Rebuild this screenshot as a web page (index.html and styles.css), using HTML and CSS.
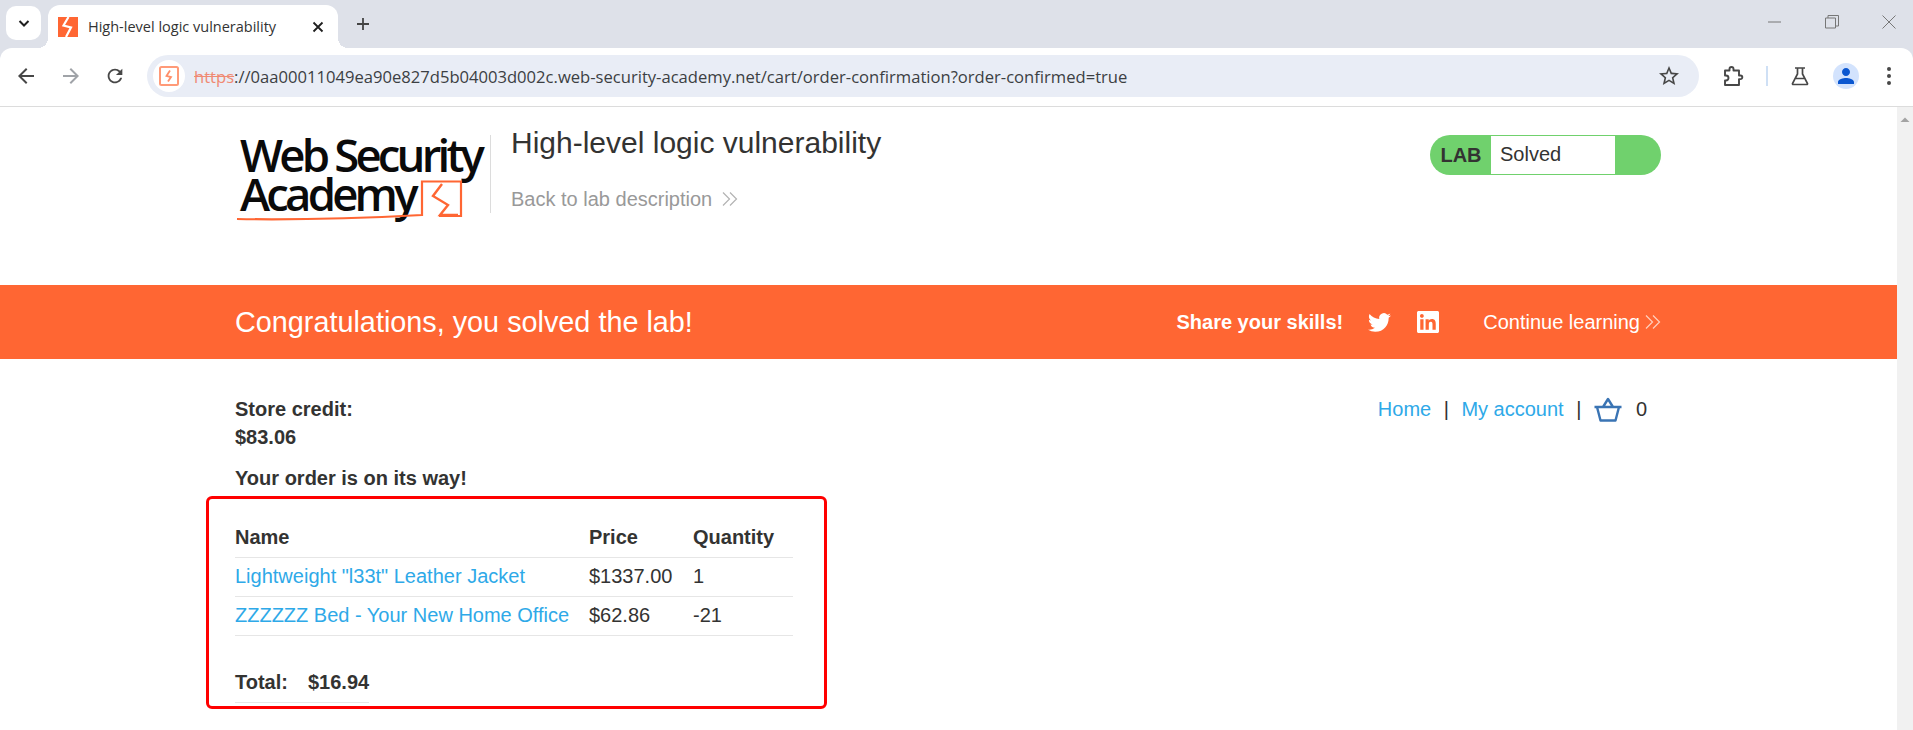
FILE: index.html
```html
<!DOCTYPE html>
<html lang="en">
<head>
    <meta charset="UTF-8">
    <title>High-level logic vulnerability</title>
    <link rel="stylesheet" href="styles.css">
</head>
<body>
    <div class="tabstrip">
        <div class="tab-search">
            <svg width="16" height="16" viewBox="0 0 16 16"><path d="M3.500 6l4.500 4.500L12.500 6" fill="none" stroke="#1f1f1f" stroke-width="2"/></svg>
        </div>
        <div class="tab">
            <svg class="tab-icon" width="20" height="20" viewBox="0 0 20 20"><rect width="20" height="20" fill="#ff6633"/><path d="M10.500 0L5.500 8.500l7.500 2L8 20" fill="none" stroke="#fff" stroke-width="2.200"/></svg>
            <span class="tab-title">High-level logic vulnerability</span>
            <svg class="tab-close" width="12" height="12" viewBox="0 0 12 12"><path d="M1.500 1.500l9 9M10.500 1.500l-9 9" stroke="#1f1f1f" stroke-width="1.800"/></svg>
        </div>
        <svg class="new-tab" width="14" height="14" viewBox="0 0 14 14"><path d="M7 1v12M1 7h12" stroke="#444" stroke-width="1.800"/></svg>
        <div class="window-buttons">
            <svg width="14" height="14" viewBox="0 0 14 14"><path d="M0 7h13" stroke="#777" stroke-width="1"/></svg>
            <svg width="14" height="14" viewBox="0 0 14 14"><path d="M.5 3h10v10H.500zM3 3V.5h10.500V11H10.500" fill="none" stroke="#777"/></svg>
            <svg width="14" height="14" viewBox="0 0 14 14"><path d="M.5.5l13 13M13.500.5l-13 13" stroke="#777"/></svg>
        </div>
    </div>

    <div class="toolbar">
        <svg class="nav-icon" width="24" height="24" viewBox="0 0 24 24"><path fill="#474747" d="M20 11H7.830l5.590-5.590L12 4l-8 8 8 8 1.410-1.410L7.830 13H20v-2z"/></svg>
        <svg class="nav-icon" width="24" height="24" viewBox="0 0 24 24"><path fill="#a0a3a8" d="M12 4l-1.410 1.410L16.170 11H4v2h12.170l-5.580 5.590L12 20l8-8z"/></svg>
        <svg class="nav-icon" width="22" height="22" viewBox="0 0 24 24"><path fill="#474747" d="M17.650 6.350A7.958 7.958 0 0012 4c-4.420 0-7.990 3.580-7.990 8s3.570 8 7.990 8c3.730 0 6.840-2.550 7.730-6h-2.080A5.990 5.990 0 0112 18c-3.310 0-6-2.690-6-6s2.690-6 6-6c1.660 0 3.140.690 4.220 1.780L13 11h7V4l-2.350 2.350z"/></svg>
        <div class="address-bar">
            <div class="site-icon">
                <svg width="20" height="20" viewBox="0 0 20 20"><rect x="1" y="1" width="18" height="18" rx="1.500" fill="#fff" stroke="#ff9a78" stroke-width="2"/><path d="M11 4.500L7.500 10l4.500 1L9 15.500" fill="none" stroke="#ff8f6a" stroke-width="1.800"/></svg>
            </div>
            <div class="url"><span class="url-scheme">https</span>://0aa00011049ea90e827d5b04003d002c.web-security-academy.net/cart/order-confirmation?order-confirmed=true</div>
            <svg class="star" width="24" height="24" viewBox="0 0 24 24"><path fill="#474747" d="M22 9.240l-7.190-.620L12 2 9.190 8.630 2 9.240l5.460 4.730L5.820 21 12 17.270 18.180 21l-1.630-7.030L22 9.240zM12 15.400l-3.760 2.270 1-4.280-3.320-2.880 4.380-.380L12 6.100l1.710 4.040 4.380.380-3.320 2.880 1 4.280L12 15.400z"/></svg>
        </div>
        <div class="toolbar-right">
            <svg width="22" height="22" viewBox="0 0 22 22"><path d="M3 5.500h4.500V4a2 2 0 014 0v1.500H17v5h1.500a1.800 1.800 0 010 3.600H17V20H3v-4.500h1a2.500 2.500 0 000-5H3z" fill="none" stroke="#474747" stroke-width="1.900" stroke-linejoin="round"/></svg>
            <span class="toolbar-sep"></span>
            <svg width="20" height="20" viewBox="0 0 20 20"><path d="M5 2h10M7.500 2v6L2.500 17.500a.8.8 0 00.7 1h13.600a.8.8 0 00.7-1L12.500 8V2M6 12.500h8" fill="none" stroke="#474747" stroke-width="1.700"/></svg>
            <div class="avatar">
                <svg width="24" height="24" viewBox="0 0 24 24"><path fill="#0b57d0" d="M12 12c2.210 0 4-1.790 4-4s-1.790-4-4-4-4 1.790-4 4 1.790 4 4 4zm0 2c-2.670 0-8 1.340-8 4v2h16v-2c0-2.660-5.330-4-8-4z"/></svg>
            </div>
            <svg width="6" height="20" viewBox="0 0 6 20"><circle cx="3" cy="3" r="2" fill="#474747"/><circle cx="3" cy="10" r="2" fill="#474747"/><circle cx="3" cy="17" r="2" fill="#474747"/></svg>
        </div>
    </div>

    <div class="viewport">
        <div class="page">
            <header class="lab-header">
                <div class="logo">
                    <div class="logo-line">Web Security</div>
                    <div class="logo-line">Academy</div>
                    <svg class="logo-mark" width="230" height="50" viewBox="0 0 230 50">
                        <path d="M2 44C60 45 130 43 187 40V6.500H226V41H204" fill="none" stroke="#ff6633" stroke-width="2.200"/>
                        <path d="M207 9L198 21L213 30L205 40H223" fill="none" stroke="#ff6633" stroke-width="2.400"/>
                    </svg>
                </div>
                <div class="lab-title">
                    <h2>High-level logic vulnerability</h2>
                    <a class="back-link" href="#">Back to lab description
                        <svg class="chevrons" width="16" height="16" viewBox="0 0 16 16"><path d="M1 1.500L7.500 8 1 14.500M8 1.500L14.500 8 8 14.500" fill="none" stroke="#b3b3b3" stroke-width="1.200"/></svg>
                    </a>
                </div>
                <div class="lab-status">
                    <span class="lab-label">LAB</span>
                    <span class="lab-state">Solved</span>
                </div>
            </header>

            <section class="solved-banner">
                <h4>Congratulations, you solved the lab!</h4>
                <div class="banner-right">
                    <strong class="share-label">Share your skills!</strong>
                    <svg class="share-twitter" width="23" height="23" viewBox="0 0 24 24"><path fill="#fff" d="M23.953 4.570a10 10 0 01-2.825.775 4.958 4.958 0 002.163-2.723c-.951.555-2.005.959-3.127 1.184a4.920 4.920 0 00-8.384 4.482C7.690 8.095 4.067 6.130 1.640 3.162a4.822 4.822 0 00-.666 2.475c0 1.710.870 3.213 2.188 4.096a4.904 4.904 0 01-2.228-.616v.060a4.923 4.923 0 003.946 4.827 4.996 4.996 0 01-2.212.085 4.936 4.936 0 004.604 3.417 9.867 9.867 0 01-6.102 2.105c-.390 0-.779-.023-1.170-.067a13.995 13.995 0 007.557 2.209c9.053 0 13.998-7.496 13.998-13.985 0-.210 0-.420-.015-.630A9.935 9.935 0 0024 4.590z"/></svg>
                    <svg class="share-linkedin" width="22" height="22" viewBox="0 0 24 24"><path fill="#fff" d="M20.447 20.452h-3.554v-5.569c0-1.328-.027-3.037-1.852-3.037-1.853 0-2.136 1.445-2.136 2.939v5.667H9.351V9h3.414v1.561h.046c.477-.900 1.637-1.850 3.370-1.850 3.601 0 4.267 2.370 4.267 5.455v6.286zM5.337 7.433c-1.144 0-2.063-.926-2.063-2.065 0-1.138.920-2.063 2.063-2.063 1.140 0 2.064.925 2.064 2.063 0 1.139-.925 2.065-2.064 2.065zm1.782 13.019H3.555V9h3.564v11.452zM22.225 0H1.771C.792 0 0 .774 0 1.729v20.542C0 23.227.792 24 1.771 24h20.451C23.200 24 24 23.227 24 22.271V1.729C24 .774 23.200 0 22.222 0h.003z"/></svg>
                    <a class="continue-link" href="#">Continue learning
                        <svg width="16" height="16" viewBox="0 0 16 16"><path d="M1 1.500L7.500 8 1 14.500M8 1.500L14.500 8 8 14.500" fill="none" stroke="#ffd0bf" stroke-width="1.200"/></svg>
                    </a>
                </div>
            </section>

            <section class="content">
                <div class="content-left">
                    <p class="credit">Store credit:<br>$83.06</p>
                    <p class="order-note">Your order is on its way!</p>
                    <div class="order-box">
                        <table class="order-table">
                            <tr><th class="col-name">Name</th><th class="col-price">Price</th><th>Quantity</th></tr>
                            <tr><td><a href="#">Lightweight "l33t" Leather Jacket</a></td><td>$1337.00</td><td>1</td></tr>
                            <tr><td><a href="#">ZZZZZZ Bed - Your New Home Office</a></td><td>$62.86</td><td>-21</td></tr>
                        </table>
                        <table class="total-table">
                            <tr><th>Total:</th><th>$16.94</th></tr>
                        </table>
                    </div>
                </div>
                <nav class="top-links">
                    <a href="#">Home</a>
                    <span class="pipe">|</span>
                    <a href="#">My account</a>
                    <span class="pipe">|</span>
                    <svg class="basket" width="28" height="25" viewBox="0 0 28 25"><path d="M.5 10h27M3 10l3.500 13.500h15L25 10M9 10l5-8 5 8" fill="none" stroke="#3a74b4" stroke-width="2.400" stroke-linejoin="round"/></svg>
                    <span class="cart-count">0</span>
                </nav>
            </section>
        </div>
        <div class="scrollbar">
            <svg width="16" height="12" viewBox="0 0 16 12"><path d="M3.500 9L8 4.500 12.500 9z" fill="#a3a3a3"/></svg>
        </div>
    </div>
</body>
</html>
```

FILE: styles.css
```css
/* Basic Reset */
* {
    margin: 0;
    padding: 0;
    box-sizing: border-box;
}

body {
    height: 730px;
    overflow: hidden;
    font-family: 'Liberation Sans', Arial, sans-serif;
    color: #333332;
    background-color: #dee1e9;
    display: flex;
    flex-direction: column;
}

a {
    color: #2ea9e8;
    text-decoration: none;
}

/* Browser chrome */
.tabstrip {
    height: 48px;
    flex-shrink: 0;
    display: flex;
    align-items: flex-end;
}

.tab-search {
    width: 35px;
    height: 34px;
    margin: 0 7px 8px 6px;
    border-radius: 10px;
    background-color: #fff;
    display: flex;
    align-items: center;
    justify-content: center;
}

.tab {
    position: relative;
    width: 290px;
    height: 43px;
    background-color: #fff;
    border-radius: 12px 12px 0 0;
    display: flex;
    align-items: center;
    padding: 0 14px 0 10px;
}

.tab::before,
.tab::after {
    content: "";
    position: absolute;
    bottom: 0;
    width: 10px;
    height: 10px;
}

.tab::before {
    left: -10px;
    background: radial-gradient(circle at 0 0, transparent 10px, #fff 10px);
}

.tab::after {
    right: -10px;
    background: radial-gradient(circle at 100% 0, transparent 10px, #fff 10px);
}

.tab-title {
    margin-left: 10px;
    font: 14.500px 'Open Sans', sans-serif;
    color: #333;
    flex: 1;
}

.new-tab {
    margin: 0 0 17px 18px;
}

.window-buttons {
    margin-left: auto;
    height: 48px;
    display: flex;
    align-items: center;
    gap: 43px;
    padding: 0 17px 4px 0;
}

.toolbar {
    height: 59px;
    flex-shrink: 0;
    background-color: #fff;
    border-radius: 12px 12px 0 0;
    border-bottom: 1px solid #dcdcdc;
    display: flex;
    align-items: center;
    padding: 0 0 2px 14px;
}

.nav-icon {
    margin-right: 21px;
}

.address-bar {
    width: 1552px;
    height: 42px;
    border-radius: 21px;
    background-color: #e9edf6;
    display: flex;
    align-items: center;
    padding: 0 18px 0 6px;
}

.site-icon {
    width: 32px;
    height: 32px;
    border-radius: 50%;
    background-color: #fff;
    display: flex;
    align-items: center;
    justify-content: center;
}

.url {
    margin-left: 9px;
    font: 16.600px 'Open Sans', sans-serif;
    color: #3c3f43;
    flex: 1;
    white-space: nowrap;
}

.url-scheme {
    color: #f08a73;
    text-decoration: line-through;
}

.toolbar-right {
    flex: 1;
    display: flex;
    align-items: center;
    padding-left: 23px;
}

.toolbar-sep {
    width: 2px;
    height: 20px;
    margin: 0 22px 0 22px;
    background-color: #cfe0f5;
}

.avatar {
    width: 26px;
    height: 26px;
    margin: 0 27px 0 23px;
    border-radius: 50%;
    background-color: #d3e3fd;
    display: flex;
    align-items: center;
    justify-content: center;
}

/* Page */
.viewport {
    flex: 1;
    display: flex;
    min-height: 0;
    background-color: #fff;
}

.page {
    flex: 1;
    min-width: 0;
}

.scrollbar {
    width: 16px;
    background-color: #f1f1f1;
    padding-top: 6px;
}

.scrollbar svg {
    display: block;
}

.lab-header {
    height: 178px;
    padding: 28px 236px 0 235px;
    display: flex;
    align-items: flex-start;
}

.logo {
    position: relative;
    width: 256px;
    height: 78px;
    padding-left: 5px;
    border-right: 1px solid #dcdcdc;
    font-family: 'Open Sans', sans-serif;
    font-weight: 600;
    font-size: 45.500px;
    letter-spacing: -3.800px;
    line-height: 39px;
    color: #0a0a0a;
    white-space: nowrap;
}

.logo-line {
    height: 39px;
}

.logo-mark {
    position: absolute;
    left: 0;
    top: 40px;
}

.lab-title {
    margin-left: 20px;
    flex: 1;
}

.lab-title h2 {
    margin-top: -10px;
    font-size: 30px;
    font-weight: 400;
    line-height: 36px;
    color: #333332;
}

.back-link {
    display: flex;
    align-items: center;
    gap: 10px;
    margin-top: 24px;
    font-size: 20px;
    line-height: 28px;
    color: #999;
}

.lab-status {
    width: 231px;
    height: 40px;
    border-radius: 20px;
    background-color: #70d16d;
    display: flex;
    align-items: stretch;
    padding: 1px 46px 1px 0;
}

.lab-label {
    width: 61px;
    text-align: center;
    font-size: 20px;
    font-weight: 700;
    line-height: 39px;
    padding-left: 1px;
}

.lab-state {
    flex: 1;
    background-color: #fff;
    font-size: 20px;
    line-height: 36px;
    padding-left: 9px;
}

.solved-banner {
    height: 74px;
    padding: 0 236px 0 235px;
    background-color: #ff6633;
    color: #fff;
    display: flex;
    align-items: center;
    justify-content: space-between;
}

.solved-banner h4 {
    font-size: 28.800px;
    font-weight: 400;
}

.banner-right {
    display: flex;
    align-items: center;
}

.share-label {
    font-size: 20px;
}

.share-twitter {
    margin-left: 25px;
}

.share-linkedin {
    margin-left: 26px;
}

.continue-link {
    margin-left: 44px;
    display: flex;
    align-items: center;
    gap: 5px;
    font-size: 20px;
    color: #fff;
}

.content {
    padding: 36px 250px 0 235px;
    display: flex;
    justify-content: space-between;
    align-items: flex-start;
}

.credit,
.order-note {
    font-size: 20px;
    font-weight: 700;
    line-height: 28px;
}

.order-note {
    margin-top: 13px;
}

/* Boxed order, the red frame is part of the picture */
.order-box {
    width: 621px;
    height: 213px;
    margin: 4px 0 0 -29px;
    padding: 19px 30px 0 26px;
    border: 3px solid #ff0000;
    border-radius: 6px;
}

.order-table,
.total-table {
    border-collapse: collapse;
    font-size: 20px;
}

.order-table {
    width: 558px;
    table-layout: fixed;
}

.col-name {
    width: 354px;
}

.col-price {
    width: 104px;
}

.order-table th,
.order-table td,
.total-table th {
    height: 39px;
    text-align: left;
    border-bottom: 1px solid #e6e6e6;
    white-space: nowrap;
}

.total-table th:first-child {
    padding-right: 20px;
}

.total-table {
    margin-top: 28px;
}

.top-links {
    display: flex;
    align-items: center;
    font-size: 20px;
    line-height: 28px;
}

.pipe {
    margin: 0 12.500px;
}

.basket {
    margin-right: 14px;
}
```
